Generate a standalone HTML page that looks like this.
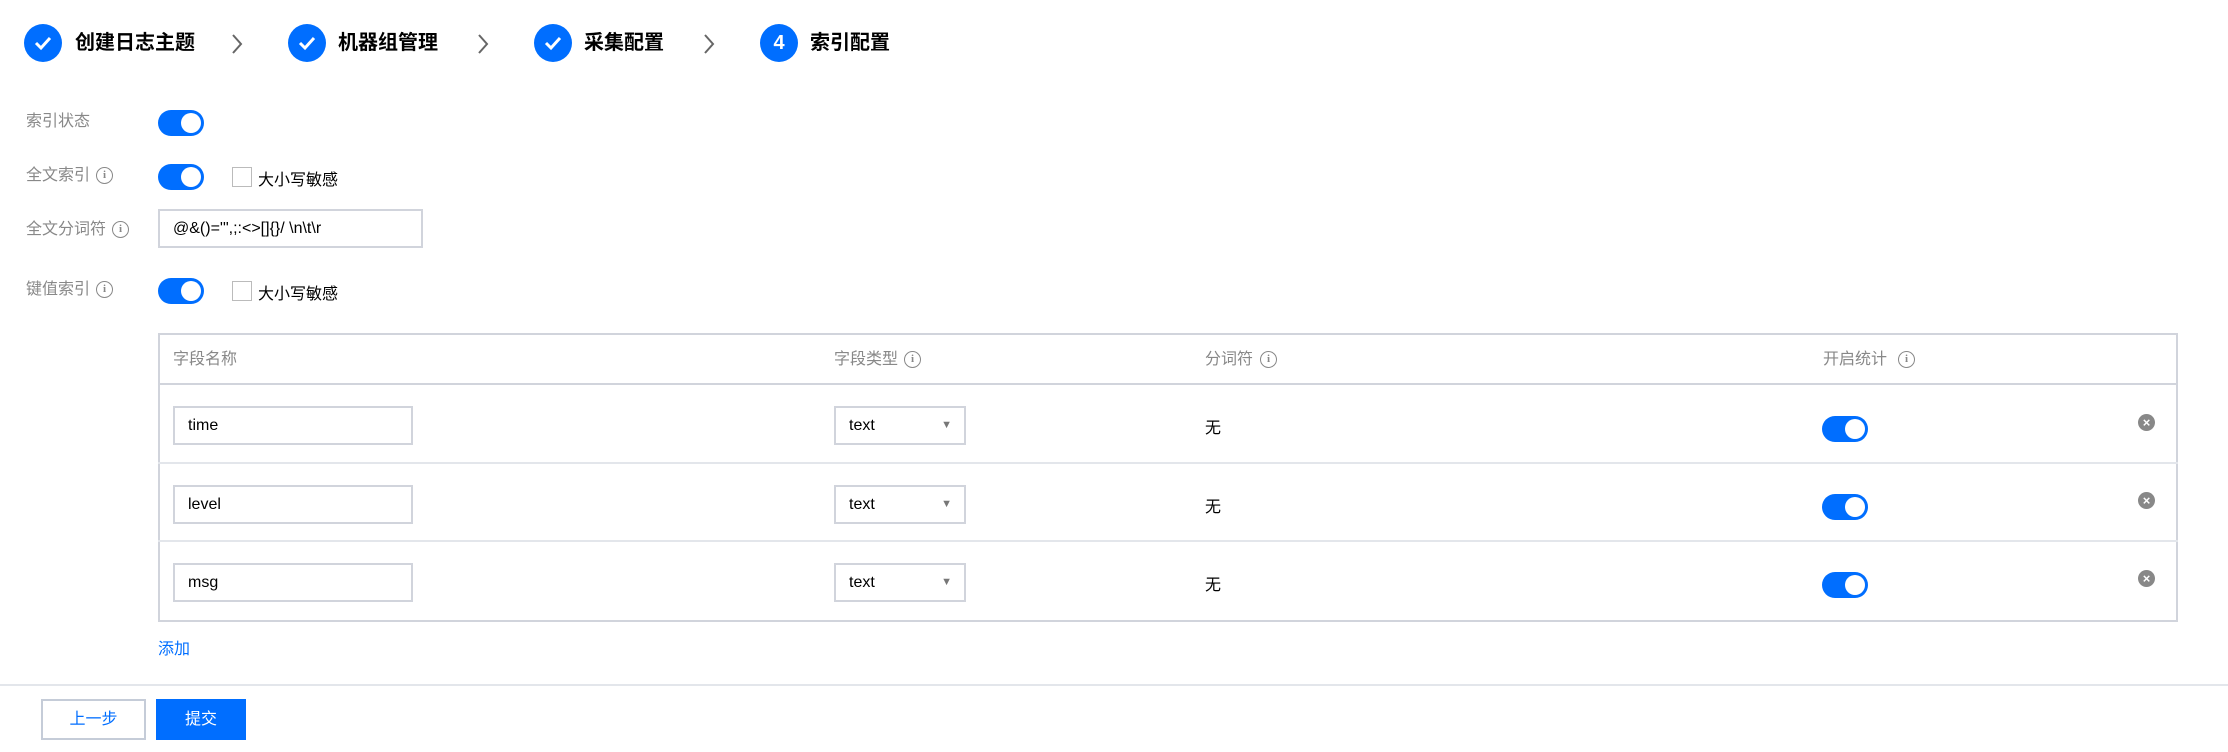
<!DOCTYPE html>
<html><head><meta charset="utf-8"><style>
*{box-sizing:border-box;margin:0;padding:0}
body{width:2228px;height:752px;background:#fff;font-family:"Liberation Sans","Noto Sans CJK SC",sans-serif;position:relative;overflow:hidden;color:#000}
.a{position:absolute}
.circ{position:absolute;width:38px;height:38px;border-radius:50%;background:#006eff;top:24px;color:#fff;text-align:center;line-height:38px;font-weight:bold;font-size:20px}
.st{position:absolute;top:30px;font-size:20px;font-weight:bold;color:#000;line-height:26px}
.chev{position:absolute;top:32px}
.lbl{position:absolute;left:26px;font-size:16px;color:#888;line-height:24px}
.tog{position:absolute;width:46px;height:26px;border-radius:13px;background:#006eff}
.tog:after{content:"";position:absolute;right:3px;top:3px;width:20px;height:20px;border-radius:50%;background:#fff}
.cb{position:absolute;width:20px;height:20px;border:1px solid #bbb;background:#fff}
.info{position:absolute;width:17px;height:17px;border:1.5px solid #888;border-radius:50%;font-size:11px;color:#888;text-align:center;line-height:14px;font-weight:bold;font-family:"Liberation Serif",serif}
.inp{position:absolute;border:2px solid #d1d4dc;background:#fff;font-size:16px;line-height:35px;padding-left:13px}
.th{position:absolute;top:348px;font-size:16px;color:#888;line-height:24px}
.hl{position:absolute;left:158px;width:2020px;height:2px;background:#e3e6eb}
.x{position:absolute;width:17px;height:17px;border-radius:50%;background:#888;color:#fff;font-size:13px;line-height:17px;text-align:center;font-weight:bold}
svg.ck{position:absolute;left:9px;top:10px}
</style></head><body>
<div class="circ" style="left:24px"><svg class="ck" width="20" height="18"><path d="M3 9 L8 14 L17 4" stroke="#fff" stroke-width="3" fill="none"/></svg></div><div class="st" style="left:75px">创建日志主题</div>
<svg class="chev" style="left:230px" width="14" height="24"><path d="M3 3 L11 12 L3 21" stroke="#666" stroke-width="2" fill="none"/></svg>
<div class="circ" style="left:288px"><svg class="ck" width="20" height="18"><path d="M3 9 L8 14 L17 4" stroke="#fff" stroke-width="3" fill="none"/></svg></div><div class="st" style="left:338px">机器组管理</div>
<svg class="chev" style="left:476px" width="14" height="24"><path d="M3 3 L11 12 L3 21" stroke="#666" stroke-width="2" fill="none"/></svg>
<div class="circ" style="left:534px"><svg class="ck" width="20" height="18"><path d="M3 9 L8 14 L17 4" stroke="#fff" stroke-width="3" fill="none"/></svg></div><div class="st" style="left:584px">采集配置</div>
<svg class="chev" style="left:702px" width="14" height="24"><path d="M3 3 L11 12 L3 21" stroke="#666" stroke-width="2" fill="none"/></svg>
<div class="circ" style="left:760px">4</div><div class="st" style="left:810px">索引配置</div>

<div class="lbl" style="top:110px">索引状态</div><div class="tog" style="left:158px;top:110px"></div>
<div class="lbl" style="top:164px">全文索引</div><div class="info" style="left:96px;top:167px">i</div><div class="tog" style="left:158px;top:164px"></div>
<div class="cb" style="left:232px;top:167px"></div><div class="a" style="left:258px;top:166px;font-size:16px">大小写敏感</div>
<div class="lbl" style="top:218px">全文分词符</div><div class="info" style="left:112px;top:221px">i</div>
<div class="inp" style="left:158px;top:209px;width:265px;height:39px;line-height:35px">@&amp;()='",;:&lt;&gt;[]{}/ \n\t\r</div>
<div class="lbl" style="top:278px">键值索引</div><div class="info" style="left:96px;top:281px">i</div><div class="tog" style="left:158px;top:278px"></div>
<div class="cb" style="left:232px;top:281px"></div><div class="a" style="left:258px;top:280px;font-size:16px">大小写敏感</div>

<div class="a" style="left:158px;top:333px;width:2020px;height:289px;border:2px solid #d1d4dc"></div>
<div class="hl" style="top:383px;background:#d1d4dc"></div>
<div class="hl" style="top:462px"></div><div class="hl" style="top:540px"></div>
<div class="th" style="left:173px">字段名称</div>
<div class="th" style="left:834px">字段类型</div><div class="info" style="left:904px;top:351px">i</div>
<div class="th" style="left:1205px">分词符</div><div class="info" style="left:1260px;top:351px">i</div>
<div class="th" style="left:1823px">开启统计</div><div class="info" style="left:1898px;top:351px">i</div>

<div class="inp" style="left:173px;top:406px;width:240px;height:39px">time</div>
<div class="inp" style="left:834px;top:406px;width:132px;height:39px">text<span style="position:absolute;right:12px;color:#777;font-size:11px">▼</span></div>
<div class="a" style="left:1205px;top:414px;font-size:16px">无</div>
<div class="tog" style="left:1822px;top:416px"></div><div class="x" style="left:2138px;top:414px">×</div>

<div class="inp" style="left:173px;top:485px;width:240px;height:39px">level</div>
<div class="inp" style="left:834px;top:485px;width:132px;height:39px">text<span style="position:absolute;right:12px;color:#777;font-size:11px">▼</span></div>
<div class="a" style="left:1205px;top:493px;font-size:16px">无</div>
<div class="tog" style="left:1822px;top:494px"></div><div class="x" style="left:2138px;top:492px">×</div>

<div class="inp" style="left:173px;top:563px;width:240px;height:39px">msg</div>
<div class="inp" style="left:834px;top:563px;width:132px;height:39px">text<span style="position:absolute;right:12px;color:#777;font-size:11px">▼</span></div>
<div class="a" style="left:1205px;top:571px;font-size:16px">无</div>
<div class="tog" style="left:1822px;top:572px"></div><div class="x" style="left:2138px;top:570px">×</div>

<div class="a" style="left:158px;top:635px;font-size:16px;color:#006eff">添加</div>
<div class="a" style="left:0;top:684px;width:2228px;height:2px;background:#e3e6eb"></div>
<div class="a" style="left:41px;top:699px;width:105px;height:41px;border:2px solid #c5ccd8;text-align:center;line-height:37px;font-size:16px;color:#006eff">上一步</div>
<div class="a" style="left:156px;top:699px;width:90px;height:41px;background:#006eff;text-align:center;line-height:41px;font-size:16px;color:#fff">提交</div>
</body></html>
